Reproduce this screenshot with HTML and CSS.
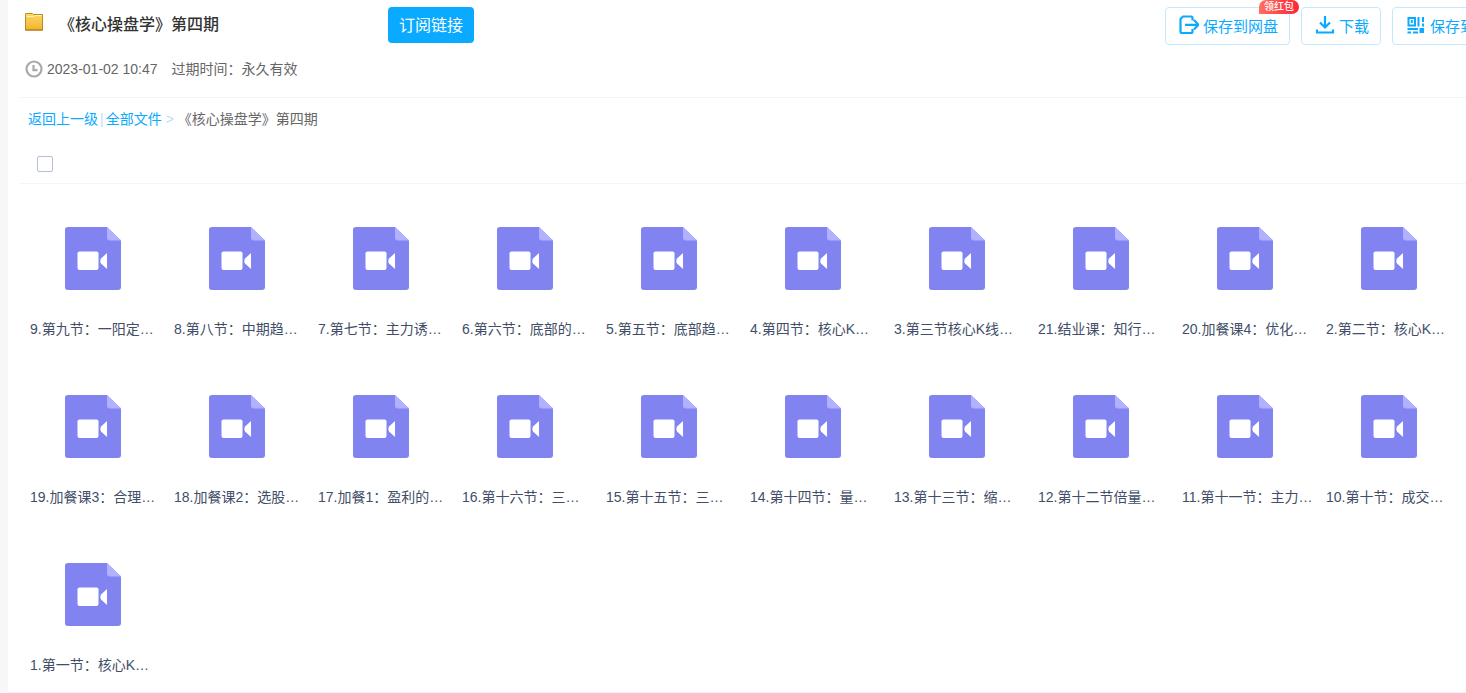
FILE: index.html
```html
<!DOCTYPE html>
<html lang="zh-CN">
<head>
<meta charset="utf-8">
<title>《核心操盘学》第四期</title>
<link rel="stylesheet" href="styles.css">
</head>
<body>
<svg class="sprite" aria-hidden="true">
  <symbol id="video" viewBox="0 0 56 63">
    <path fill="#8183f1" d="M3 0H42L56 13.500V60a3 3 0 0 1-3 3H3a3 3 0 0 1-3-3V3a3 3 0 0 1 3-3z"/>
    <path fill="#b0b1ff" d="M42 0L56 13.500H45a3 3 0 0 1-3-3z"/>
    <rect x="12.500" y="24.500" width="21" height="18.500" rx="2" fill="#fff"/>
    <path fill="#fff" d="M42 26V42L36 36.500Q34.500 34 36 31.500z"/>
  </symbol>
</svg>
<main class="page">
  <header class="header">
    <div class="info">
      <div class="title-row">
        <svg class="folder" viewBox="0 0 18 18" aria-hidden="true">
          <defs><linearGradient id="gold" x1="0" y1="0" x2="0" y2="1"><stop offset="0" stop-color="#ffd766"/><stop offset="1" stop-color="#f0b42f"/></linearGradient></defs>
          <path d="M.5 1.500V.5H7.500L8.500 1.500H17.500V17H.5z" fill="url(#gold)" stroke="#c08a20"/>
          <path d="M1.500 3.500H9L10 2.500H16.500" fill="none" stroke="#fff0ae"/>
          <path d="M0 17H18" stroke="#ae7413"/>
        </svg>
        <h1 class="title">《核心操盘学》第四期</h1>
        <button class="subscribe" type="button">订阅链接</button>
      </div>
      <div class="meta">
        <svg class="clock" viewBox="0 0 18 18" fill="none" stroke="#a9a9a9" stroke-width="2.200" aria-hidden="true"><circle cx="9" cy="9" r="7.500"/><path d="M8.500 5V10.200H12.500"/></svg>
        <time datetime="2023-01-02T10:47">2023-01-02 10:47</time>
        <span class="expire">过期时间：永久有效</span>
      </div>
    </div>
    <div class="actions">
      <button class="action" type="button">
        <svg class="icon" viewBox="0 0 20 20" fill="none" stroke="#09aaff" stroke-width="2.200" aria-hidden="true"><path d="M13.500 5.500V3A1.500 1.500 0 0 0 12 1.500H4L1.500 4V16.500A1.500 1.500 0 0 0 3 18H12A1.500 1.500 0 0 0 13.500 16.500V14M6 9.800H19M15 5L19.500 9.800L15 14.500"/></svg>
        保存到网盘
        <span class="badge">领红包</span>
      </button>
      <button class="action" type="button">
        <svg class="icon" viewBox="0 0 20 20" fill="none" stroke="#09aaff" stroke-width="2.200" aria-hidden="true"><path d="M10 1V12.500M5 7.500L10 12.500L15 7.500M2 14.500V17.500H18V14.500"/></svg>
        下载
      </button>
      <button class="action" type="button">
        <svg class="icon" viewBox="0 0 20 20" fill="none" stroke="#09aaff" stroke-width="2" aria-hidden="true"><path d="M2.500 3H9V10.500H2.500zM5.800 5V8M12.500 2V11.500M17 2V7M17 8.500V11.500M1.500 14H12M1.500 17.500H5M7 17.500H12"/><path d="M13.500 13h4.500v5h-4.500z" fill="#09aaff" stroke="none"/></svg>
        保存到手机
      </button>
    </div>
  </header>
  <nav class="crumbs">
    <a href="#">返回上一级</a><span class="sep">|</span><a href="#">全部文件</a><span class="arrow">&gt;</span><span>《核心操盘学》第四期</span>
  </nav>
  <div class="select-bar"><input class="check" type="checkbox" aria-label="全选"></div>
  <section class="files">
    <a class="file" href="#"><svg class="thumb"><use href="#video"/></svg><span class="name">9.第九节：一阳定…</span></a>
    <a class="file" href="#"><svg class="thumb"><use href="#video"/></svg><span class="name">8.第八节：中期趋…</span></a>
    <a class="file" href="#"><svg class="thumb"><use href="#video"/></svg><span class="name">7.第七节：主力诱…</span></a>
    <a class="file" href="#"><svg class="thumb"><use href="#video"/></svg><span class="name">6.第六节：底部的…</span></a>
    <a class="file" href="#"><svg class="thumb"><use href="#video"/></svg><span class="name">5.第五节：底部趋…</span></a>
    <a class="file" href="#"><svg class="thumb"><use href="#video"/></svg><span class="name">4.第四节：核心K…</span></a>
    <a class="file" href="#"><svg class="thumb"><use href="#video"/></svg><span class="name">3.第三节核心K线…</span></a>
    <a class="file" href="#"><svg class="thumb"><use href="#video"/></svg><span class="name">21.结业课：知行…</span></a>
    <a class="file" href="#"><svg class="thumb"><use href="#video"/></svg><span class="name">20.加餐课4：优化…</span></a>
    <a class="file" href="#"><svg class="thumb"><use href="#video"/></svg><span class="name">2.第二节：核心K…</span></a>
    <a class="file" href="#"><svg class="thumb"><use href="#video"/></svg><span class="name">19.加餐课3：合理…</span></a>
    <a class="file" href="#"><svg class="thumb"><use href="#video"/></svg><span class="name">18.加餐课2：选股…</span></a>
    <a class="file" href="#"><svg class="thumb"><use href="#video"/></svg><span class="name">17.加餐1：盈利的…</span></a>
    <a class="file" href="#"><svg class="thumb"><use href="#video"/></svg><span class="name">16.第十六节：三…</span></a>
    <a class="file" href="#"><svg class="thumb"><use href="#video"/></svg><span class="name">15.第十五节：三…</span></a>
    <a class="file" href="#"><svg class="thumb"><use href="#video"/></svg><span class="name">14.第十四节：量…</span></a>
    <a class="file" href="#"><svg class="thumb"><use href="#video"/></svg><span class="name">13.第十三节：缩…</span></a>
    <a class="file" href="#"><svg class="thumb"><use href="#video"/></svg><span class="name">12.第十二节倍量…</span></a>
    <a class="file" href="#"><svg class="thumb"><use href="#video"/></svg><span class="name">11.第十一节：主力…</span></a>
    <a class="file" href="#"><svg class="thumb"><use href="#video"/></svg><span class="name">10.第十节：成交…</span></a>
    <a class="file" href="#"><svg class="thumb"><use href="#video"/></svg><span class="name">1.第一节：核心K…</span></a>
  </section>
</main>
</body>
</html>
```

FILE: styles.css
```css
* {
  box-sizing: border-box;
}

body {
  margin: 0;
  padding-left: 8px;
  background: #f7f7f7;
  color: #666;
  font: 14px/20px "Liberation Sans", "Noto Sans CJK SC", sans-serif;
}

button {
  font-family: inherit;
  cursor: pointer;
}

a {
  color: #09aaff;
  text-decoration: none;
}

.sprite {
  position: absolute;
  width: 0;
  height: 0;
}

.page {
  padding-left: 12px;
  background: #fff;
  border-bottom: 1px solid #f2f2f2;
}

.header {
  display: flex;
  justify-content: space-between;
  height: 98px;
  border-bottom: 1px solid #f5f5f5;
}

.info {
  padding: 7px 0 0 5px;
}

.title-row {
  display: flex;
  align-items: center;
}

.folder {
  width: 18px;
  height: 18px;
  margin-bottom: 6px;
}

.title {
  width: 329px;
  margin: 0;
  padding-left: 16px;
  color: #333;
  font-size: 16px;
  font-weight: 500;
  line-height: 24px;
}

.subscribe {
  height: 36px;
  margin-left: 16px;
  padding: 0 11px 2px;
  border: 0;
  border-radius: 4px;
  background: #09aaff;
  color: #fff;
  font-size: 16px;
}

.meta {
  display: flex;
  align-items: center;
  margin-top: 16px;
}

.clock {
  width: 18px;
  height: 18px;
  margin-right: 4px;
}

.expire {
  margin-left: 14px;
}

.actions {
  display: flex;
  flex: 0 0 301px;
  gap: 11px;
  padding-top: 7px;
  overflow: hidden;
}

.action {
  position: relative;
  display: flex;
  flex: none;
  align-items: center;
  gap: 4px;
  height: 38px;
  padding: 0 11px 2px 13px;
  border: 1px solid #c4e9ff;
  border-radius: 4px;
  background: #fff;
  color: #09aaff;
  font-size: 15px;
}

.icon {
  width: 20px;
  height: 20px;
}

.badge {
  position: absolute;
  top: -8px;
  right: -10px;
  width: 40px;
  border-radius: 8px 8px 8px 0;
  background: linear-gradient(90deg, #ff6f61, #ff2537);
  color: #fff;
  font-size: 10px;
  font-weight: 500;
  line-height: 14px;
  text-align: center;
}

.crumbs {
  display: flex;
  padding: 11px 8px;
}

.sep,
.arrow {
  color: #c4dbfe;
}

.sep {
  margin: 0 2px;
}

.arrow {
  margin: 0 4px;
}

.select-bar {
  display: flex;
  align-items: center;
  height: 44px;
  padding: 4px 0 0 17px;
  border-bottom: 1px solid #f5f5f5;
}

.check {
  appearance: none;
  width: 16px;
  height: 16px;
  margin: 0;
  border: 1px solid #b4c0d8;
  border-radius: 2px;
  background: #fff;
}

.files {
  display: grid;
  grid-template-columns: repeat(auto-fill, 144px);
  row-gap: 56px;
  padding: 43px 0 17px 1px;
}

.file {
  display: flex;
  flex-direction: column;
  align-items: center;
  gap: 29px;
  color: #424e67;
}

.thumb {
  width: 56px;
  height: 63px;
}

.name {
  align-self: stretch;
  padding-left: 9px;
  white-space: nowrap;
}
```
